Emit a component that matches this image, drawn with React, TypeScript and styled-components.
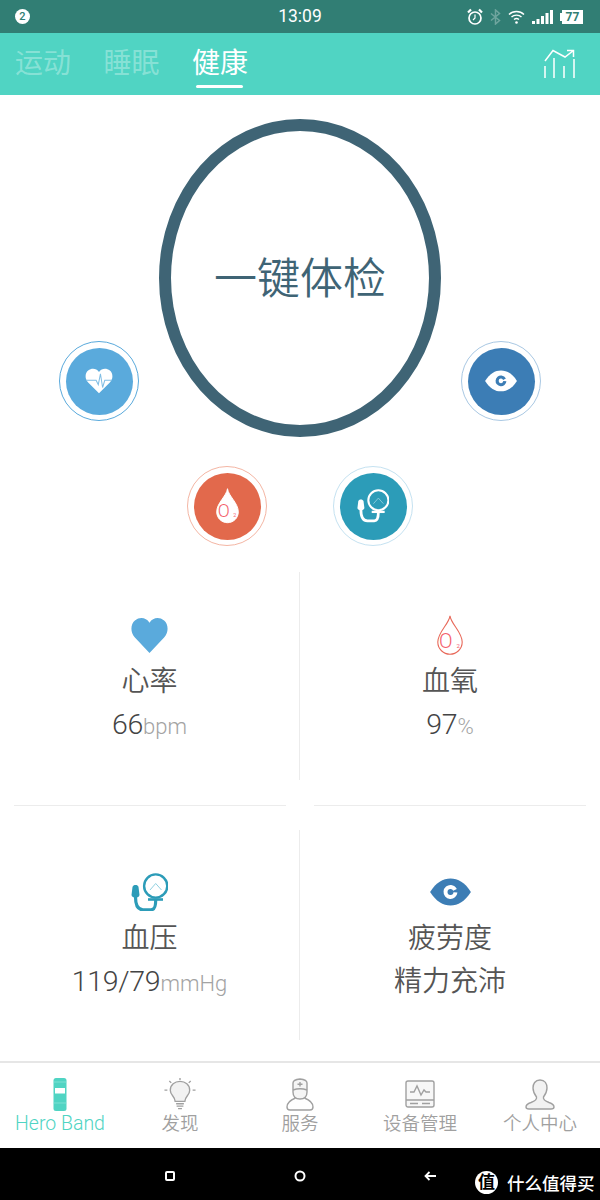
import React, { FC, ReactNode } from 'react';
import styled, { createGlobalStyle } from 'styled-components';

const GlobalStyle = createGlobalStyle`
  html, body {
    margin: 0;
    padding: 0;
    background: #000;
  }
  * {
    box-sizing: border-box;
  }
  body {
    font-family: Roboto, "Noto Sans CJK SC", sans-serif;
  }
`;

const Screen = styled.div`
  width: 600px;
  height: 1200px;
  display: flex;
  flex-direction: column;
  overflow: hidden;
  background: #000;
`;

const StatusBar = styled.div`
  height: 33px;
  flex: none;
  background: #317e74;
  display: grid;
  grid-template-columns: 1fr auto 1fr;
  align-items: center;
  padding: 0 17px 0 15px;
  color: #fff;
`;

const NoticeBadge = styled.div`
  width: 15px;
  height: 15px;
  border-radius: 50%;
  background: #fff;
  color: #317e74;
  font-size: 11px;
  font-weight: 500;
  line-height: 15px;
  text-align: center;
`;

const Clock = styled.div`
  font-size: 17.5px;
  font-weight: 400;
  line-height: 33px;
  margin-left: 2px;
`;

const StatusIcons = styled.div`
  display: flex;
  align-items: center;
  justify-content: flex-end;
  gap: 7px;
`;

const Battery = styled.div`
  width: 21px;
  height: 14px;
  background: #fff;
  color: #317e74;
  font-size: 12px;
  font-weight: 700;
  line-height: 14px;
  text-align: center;
  margin-left: 2px;
  position: relative;
  &::before {
    content: '';
    position: absolute;
    left: -2px;
    top: 3px;
    width: 2px;
    height: 8px;
    background: #fff;
  }
`;

const TabBar = styled.div`
  height: 62px;
  flex: none;
  background: #50d4c3;
  display: flex;
  align-items: flex-start;
  padding: 0 24px 0 15px;
  gap: 32.5px;
`;

const Tab = styled.div<{ $active?: boolean }>`
  position: relative;
  font-size: 28px;
  line-height: 62px;
  width: 56px;
  text-align: center;
  color: ${(p) => (p.$active ? '#fff' : 'rgba(255, 255, 255, 0.32)')};
  &::after {
    content: '';
    display: ${(p) => (p.$active ? 'block' : 'none')};
    position: absolute;
    left: 4px;
    right: 5px;
    top: 52px;
    height: 3px;
    border-radius: 2px;
    background: #fff;
  }
`;

const ChartButton = styled.div`
  margin-left: auto;
  margin-top: 16px;
  width: 32px;
  height: 30px;
`;

const Page = styled.div`
  flex: 1;
  background: #fff;
  display: flex;
  flex-direction: column;
`;

const Hero = styled.section`
  height: 477px;
  flex: none;
  padding-top: 24px;
`;

const HeroTop = styled.div`
  display: grid;
  grid-template-columns: 80px 282px 80px;
  justify-content: center;
  column-gap: 20px;
`;

const CheckOval = styled.div`
  width: 282px;
  height: 318px;
  border: 12px solid #3f6475;
  border-radius: 50%;
  padding-bottom: 7px;
  display: flex;
  align-items: center;
  justify-content: center;
  color: #3f6475;
  font-size: 43px;
  font-weight: 350;
`;

const SideRing = styled.div`
  margin-top: 222px;
`;

const HeroBottom = styled.div`
  display: flex;
  justify-content: center;
  gap: 66px;
  margin-top: 29px;
`;

const Ring = styled.div<{ $edge: string; $fill: string }>`
  width: 80px;
  height: 80px;
  border-radius: 50%;
  border: 1.5px solid ${(p) => p.$edge};
  display: flex;
  align-items: center;
  justify-content: center;
  & > div {
    width: 67px;
    height: 67px;
    border-radius: 50%;
    background: ${(p) => p.$fill};
    display: flex;
    align-items: center;
    justify-content: center;
  }
`;

const Metrics = styled.section`
  height: 489px;
  flex: none;
  display: flex;
  flex-direction: column;
`;

const MetricRow = styled.div<{ $height: number }>`
  height: ${(p) => p.$height}px;
  display: grid;
  grid-template-columns: 299px 1px 300px;
`;

const VLine = styled.div`
  background: #ececec;
`;

const Metric = styled.div<{ $pad: number }>`
  display: flex;
  flex-direction: column;
  align-items: center;
  padding-top: ${(p) => p.$pad}px;
`;

const MetricIcon = styled.div`
  height: 42px;
  display: flex;
  align-items: center;
  justify-content: center;
`;

const MetricName = styled.div`
  font-size: 28px;
  font-weight: 350;
  line-height: 42px;
  margin-top: 5px;
  color: #555;
`;

const MetricValue = styled.div`
  font-size: 28.5px;
  font-weight: 300;
  line-height: 43px;
  letter-spacing: -0.3px;
  color: #444;
  white-space: nowrap;
`;

const Unit = styled.span`
  font-size: 22px;
  letter-spacing: 0;
  color: #a3a3a3;
`;

const MetricText = styled.div`
  font-size: 28px;
  font-weight: 350;
  line-height: 43px;
  color: #555;
`;

const HLines = styled.div`
  height: 50px;
  padding: 0 14px;
  display: flex;
  align-items: center;
  justify-content: space-between;
  & > div {
    width: 272px;
    height: 1px;
    background: #ececec;
  }
`;

const BottomNav = styled.nav`
  height: 87px;
  flex: none;
  margin-top: auto;
  background: #fff;
  border-top: 2px solid #e6e6e6;
  border-radius: 0 0 4px 4px;
  display: grid;
  grid-template-columns: repeat(5, 120px);
`;

const NavItem = styled.div<{ $active?: boolean }>`
  display: flex;
  flex-direction: column;
  align-items: center;
  padding-top: 15px;
  color: ${(p) => (p.$active ? '#50d4c3' : '#a0a0a0')};
  & > svg {
    height: 34px;
    flex: none;
  }
`;

const NavLabel = styled.div<{ $active?: boolean }>`
  font-size: ${(p) => (p.$active ? '19.5px' : '18.5px')};
  font-weight: ${(p) => (p.$active ? 300 : 350)};
  line-height: 24px;
  white-space: nowrap;
`;

const SystemBar = styled.div`
  height: 53px;
  flex: none;
  background: #000;
  display: grid;
  grid-template-columns: 100px 160px 100px 1fr;
  align-items: center;
  color: #fff;
  padding-left: 120px;
`;

const SysSlot = styled.div`
  display: flex;
  justify-content: center;
  margin-top: 3px;
`;

const Brand = styled.div`
  display: flex;
  align-items: center;
  gap: 9px;
  font-size: 17.5px;
  font-weight: 500;
  margin-left: -5px;
  margin-top: 16px;
  white-space: nowrap;
`;

const BrandMark = styled.div`
  width: 23px;
  height: 23px;
  border-radius: 50%;
  background: #fff;
  color: #000;
  font-size: 17px;
  font-weight: 700;
  line-height: 23px;
  text-align: center;
`;

const HEART_PATH =
  'M19 35 L4 20 C-1 15 -0.5 7 4 3.5 C9 -0.5 15.5 0.5 19 5.5 C22.5 0.5 29 -0.5 34 3.5 C38.5 7 39 15 34 20 Z';

const HeartIcon: FC<{ size: number; color: string }> = ({ size, color }) => (
  <svg width={size} height={size} viewBox="0 0 38 36" preserveAspectRatio="none">
    <path d={HEART_PATH} fill={color} />
  </svg>
);

const PulseHeart: FC = () => (
  <svg width="28" height="26" viewBox="0 0 38 36">
    <path d={HEART_PATH} fill="#fff" />
    <path d="M1 17 H15 L18 23 L21 8 L24 27 L27 17 H37" fill="none" stroke="#7fbde4" strokeWidth="1.4" />
  </svg>
);

const DropIcon: FC<{ width: number; ring: boolean }> = ({ width, ring }) => (
  <svg width={width} height={width * 1.54} viewBox="0 0 26 40">
    <path
      d="M13 0.8 C14 9 25.2 17 25.2 27 C25.2 34 19.5 39.2 13 39.2 C6.5 39.2 0.8 34 0.8 27 C0.8 17 12 9 13 0.8 Z"
      fill={ring ? 'none' : '#fff'}
      stroke={ring ? '#e8695a' : '#fff'}
      strokeWidth="1.1"
    />
    <text x="2" y="33" fontFamily="Roboto, sans-serif" fontWeight="300" fontSize="20" fill="#f4606c">
      O
    </text>
    <text x="19.5" y="33" fontFamily="Roboto, sans-serif" fontSize="6" fill="#f4606c">
      2
    </text>
  </svg>
);

const EyeIcon: FC<{ width: number; body: string; pupil: string }> = ({ width, body, pupil }) => (
  <svg width={width} height={width * 0.68} viewBox="0 0 41 28">
    <path d="M0 14 C6 4.5 13 0.5 20.5 0.5 C28 0.5 35 4.5 41 14 C35 23.5 28 27.5 20.5 27.5 C13 27.5 6 23.5 0 14 Z" fill={body} />
    <circle
      cx="20.5"
      cy="14"
      r="5"
      fill="none"
      stroke={pupil}
      strokeWidth="4"
      strokeDasharray="28 3.4"
      transform="rotate(5 20.5 14)"
    />
  </svg>
);

const GaugeIcon: FC<{ width: number; color: string; needle: string }> = ({ width, color, needle }) => (
  <svg width={width} height={width * 1.054} viewBox="0 0 37 39" fill="none">
    <circle cx="24.7" cy="13" r="11.6" stroke={color} strokeWidth="2.4" />
    <path d="M19 17 L24.7 10.5 L30.5 17" stroke={needle} strokeWidth="1" />
    <path d="M17 26.5 H32" stroke={color} strokeWidth="2.6" />
    <path d="M4.5 24 C4.5 33 7 36.8 12 36.8 H20 C23 36.8 24.7 35 24.7 27" stroke={color} strokeWidth="3.2" />
    <path d="M1.5 14 C2 12.5 3 12 4.5 12 C6 12 7 12.5 7.5 14 L8.5 22 C8 25.5 1 25.5 0.5 22 Z" fill={color} />
  </svg>
);

const ChartIcon: FC = () => (
  <svg width="32" height="30" viewBox="0 0 32 30" fill="none" stroke="#fff" strokeWidth="1.5">
    <path d="M1 12 L9 1.5 L21 8 L29.5 1.5 M23 1.5 H29.5 V8" />
    <path d="M1 17 V29 M10 9 V29 M20 17 V29 M30 10 V29" />
  </svg>
);

const navIcons: Record<string, ReactNode> = {
  band: (
    <svg width="14" height="34" viewBox="0 0 14 34">
      <rect x="0.5" y="0" width="13" height="33" rx="2.5" fill="#50d4c3" />
      <rect x="2" y="10" width="10" height="5.5" fill="#fff" />
      <path d="M0.5 4 H13.5 M0.5 25 H13.5" stroke="#8fe5da" strokeWidth="0.7" />
    </svg>
  ),
  bulb: (
    <svg width="32" height="35" viewBox="0 0 32 35" fill="none" stroke="#a0a0a0" strokeWidth="1.4">
      <path d="M11 24 C11 19 6 18 6 12.5 C6 7 10.5 3.5 16 3.5 C21.5 3.5 26 7 26 12.5 C26 18 21 19 21 24 Z" fill="#f2f2f2" />
      <path d="M12 26.5 H20 M12.5 29 H19.5 M14 31.5 H18" />
      <path d="M16 0 V2 M5 3 L7 5 M27 3 L25 5 M0 12.5 H3 M29 12.5 H32" />
    </svg>
  ),
  doctor: (
    <svg width="28" height="34" viewBox="0 0 28 34" fill="none" stroke="#a0a0a0" strokeWidth="1.4">
      <path d="M7 5 C7 2.5 9 1.5 14 1 C19 1.5 21 2.5 21 5 V14 C21 19 18 21 14 21 C10 21 7 19 7 14 Z" fill="#f5f5f5" />
      <path d="M7 12 C11 10.5 17 10.5 21 12 M14 4 V8.5 M11.5 6.2 H16.5" />
      <path d="M9.5 20 C4.5 22 1 25 1 29 C1 31 2 32 4 32 H24 C26 32 27 31 27 29 C27 25 23.5 22 18.5 20" />
    </svg>
  ),
  device: (
    <svg width="30" height="34" viewBox="0 0 30 34" fill="none" stroke="#a0a0a0" strokeWidth="1.4">
      <rect x="1" y="3" width="28" height="26" rx="2" fill="#f7f7f7" />
      <path d="M1 22 H29 M5 14 H9 L12 8 L16 17 L19 12 L21 14 H25" />
      <path d="M5 25.5 H13 M17 25.5 H25" />
    </svg>
  ),
  person: (
    <svg width="30" height="34" viewBox="0 0 30 34" fill="#f2f2f2" stroke="#a0a0a0" strokeWidth="1.4">
      <path d="M15 2 C20 2 22 6 22 10 C22 14 20 17 18.5 19 C18 21 20 23 24 24.5 C27 25.5 29 27 29 29 C29 30.5 28 31 26 31 H4 C2 31 1 30.5 1 29 C1 27 3 25.5 6 24.5 C10 23 12 21 11.5 19 C10 17 8 14 8 10 C8 6 10 2 15 2 Z" />
    </svg>
  ),
};

const navItems = [
  { key: 'band', label: 'Hero Band', active: true },
  { key: 'bulb', label: '发现' },
  { key: 'doctor', label: '服务' },
  { key: 'device', label: '设备管理' },
  { key: 'person', label: '个人中心' },
];

const App: FC = () => (
  <Screen>
    <GlobalStyle />
    <StatusBar>
      <NoticeBadge>2</NoticeBadge>
      <Clock>13:09</Clock>
      <StatusIcons>
        <svg width="16" height="17" viewBox="0 0 16 17" fill="none" stroke="#fff" strokeWidth="1.7">
          <circle cx="8" cy="10" r="6" />
          <path d="M8 6.5 V10 L6 12" strokeWidth="1.2" />
          <path d="M1 4.5 L4 1.5 M15 4.5 L12 1.5" strokeWidth="2.2" />
        </svg>
        <svg width="11" height="16" viewBox="0 0 11 16" fill="none" stroke="rgba(255,255,255,0.3)" strokeWidth="1.5">
          <path d="M1 4.5 L9.5 11.5 L5.5 15 V1 L9.5 4.5 L1 11.5" />
        </svg>
        <svg width="17" height="14" viewBox="0 0 17 14" fill="none" stroke="#fff" strokeWidth="1.4">
          <path d="M1 4.5 C5 0.5 12 0.5 16 4.5 M3.5 7 C6 4.5 11 4.5 13.5 7 M6 9.5 C7.5 8.3 9.5 8.3 11 9.5" />
          <circle cx="8.5" cy="12.5" r="1.3" fill="#fff" stroke="none" />
        </svg>
        <svg width="21" height="14" viewBox="0 0 21 14" fill="#fff">
          <rect x="0" y="11" width="3" height="3" />
          <rect x="4.5" y="9" width="3" height="5" />
          <rect x="9" y="6" width="3" height="8" />
          <rect x="13.5" y="3" width="3" height="11" />
          <rect x="18" y="0" width="3" height="14" />
        </svg>
        <Battery>77</Battery>
      </StatusIcons>
    </StatusBar>
    <TabBar>
      <Tab>运动</Tab>
      <Tab>睡眠</Tab>
      <Tab $active>健康</Tab>
      <ChartButton>
        <ChartIcon />
      </ChartButton>
    </TabBar>
    <Page>
      <Hero>
        <HeroTop>
          <SideRing>
            <Ring $edge="#5aaadc" $fill="#5aaadc">
              <div>
                <PulseHeart />
              </div>
            </Ring>
          </SideRing>
          <CheckOval>一键体检</CheckOval>
          <SideRing>
            <Ring $edge="#a9c8e3" $fill="#3c7db5">
              <div>
                <EyeIcon width={32} body="#fff" pupil="#3c7db5" />
              </div>
            </Ring>
          </SideRing>
        </HeroTop>
        <HeroBottom>
          <Ring $edge="#f4b6a4" $fill="#e2694c">
            <div>
              <DropIcon width={23} ring={false} />
            </div>
          </Ring>
          <Ring $edge="#c5e2f1" $fill="#2c9cb8">
            <div>
              <GaugeIcon width={32} color="#fff" needle="#8fd0e0" />
            </div>
          </Ring>
        </HeroBottom>
      </Hero>
      <Metrics>
        <MetricRow $height={208}>
          <Metric $pad={42}>
            <MetricIcon>
              <HeartIcon size={37} color="#5aaadc" />
            </MetricIcon>
            <MetricName>心率</MetricName>
            <MetricValue>
              66<Unit>bpm</Unit>
            </MetricValue>
          </Metric>
          <VLine />
          <Metric $pad={42}>
            <MetricIcon>
              <DropIcon width={26} ring />
            </MetricIcon>
            <MetricName>血氧</MetricName>
            <MetricValue>
              97<Unit>%</Unit>
            </MetricValue>
          </Metric>
        </MetricRow>
        <HLines>
          <div />
          <div />
        </HLines>
        <MetricRow $height={210}>
          <Metric $pad={41}>
            <MetricIcon>
              <GaugeIcon width={37} color="#2c9cb8" needle="#8fd0e0" />
            </MetricIcon>
            <MetricName>血压</MetricName>
            <MetricValue>
              119/79<Unit>mmHg</Unit>
            </MetricValue>
          </Metric>
          <VLine />
          <Metric $pad={41}>
            <MetricIcon>
              <EyeIcon width={41} body="#3c7db5" pupil="#fff" />
            </MetricIcon>
            <MetricName>疲劳度</MetricName>
            <MetricText>精力充沛</MetricText>
          </Metric>
        </MetricRow>
      </Metrics>
      <BottomNav>
        {navItems.map((item) => (
          <NavItem key={item.key} $active={item.active}>
            {navIcons[item.key]}
            <NavLabel $active={item.active}>{item.label}</NavLabel>
          </NavItem>
        ))}
      </BottomNav>
    </Page>
    <SystemBar>
      <SysSlot>
        <svg width="10" height="10" viewBox="0 0 10 10" fill="none" stroke="#fff" strokeWidth="2">
          <rect x="1" y="1" width="8" height="8" rx="1" />
        </svg>
      </SysSlot>
      <SysSlot>
        <svg width="12" height="12" viewBox="0 0 12 12" fill="none" stroke="#fff" strokeWidth="2">
          <circle cx="6" cy="6" r="4.5" />
        </svg>
      </SysSlot>
      <SysSlot>
        <svg width="12" height="10" viewBox="0 0 12 10" fill="none" stroke="#fff" strokeWidth="1.8">
          <path d="M12 5 H2 M5.5 1 L1.5 5 L5.5 9" />
        </svg>
      </SysSlot>
      <Brand>
        <BrandMark>值</BrandMark>
        什么值得买
      </Brand>
    </SystemBar>
  </Screen>
);

export default App;
